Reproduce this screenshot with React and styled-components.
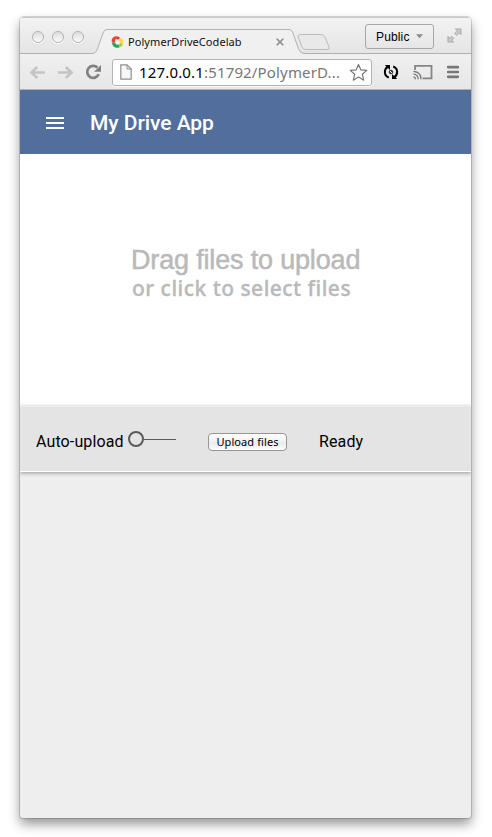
import React from "react";
import styled, { createGlobalStyle } from "styled-components";

const GlobalStyle = createGlobalStyle`
  *, *::before, *::after { box-sizing: border-box; }
  body { margin: 0; background: #fff; overflow: hidden; }
  svg { display: block; flex: none; }
`;

const Page = styled.div`
  height: 837px;
  padding: 17px 21px 0 20px;
`;
const Window = styled.main`
  height: 801px;
  display: flex;
  flex-direction: column;
  overflow: hidden;
  border-radius: 4px 4px 3px 3px;
  background: #eee;
  box-shadow: 0 0 0 1px rgba(0, 0, 0, 0.14), 0 6px 12px rgba(0, 0, 0, 0.42);
`;
const TitleBar = styled.header`
  height: 37px;
  flex: none;
  display: flex;
  align-items: flex-start;
  background: linear-gradient(#f3f3f3, #e4e4e4);
  box-shadow: inset 0 1px #c9c9c9, inset 0 -1px #b0b0b0;
`;
const Lights = styled.div`
  display: flex;
  gap: 8px;
  padding: 14px 0 0 12px;
  width: 73px;
`;
const Light = styled.i`
  width: 12px;
  height: 12px;
  border: 1px solid #b2b2b2;
  border-radius: 50%;
  background: linear-gradient(#dedede, #fafafa);
  box-shadow: 0 1px #fff;
`;
const TabMiddle = styled.div`
  width: 182px;
  height: 25px;
  margin-top: 12px;
  padding: 0 3px 0 4px;
  display: flex;
  align-items: center;
  border-top: 1px solid #b2b2b2;
  background: #f0f0f0;
`;
const TabTitle = styled.span`
  flex: 1;
  margin-left: 4px;
  color: #111;
  font: 11px/16px "Noto Sans", sans-serif;
  letter-spacing: 0.07px;
  white-space: nowrap;
`;
const TabEdgeBox = styled.div`
  margin-top: 12px;
`;
const NewTab = styled.div`
  margin: 17px 0 0 -7px;
`;
const ProfileButton = styled.button`
  width: 69px;
  height: 25px;
  margin: 7px 0 0 auto;
  padding: 0 9px 0 10px;
  display: flex;
  align-items: center;
  justify-content: space-between;
  border: 1px solid #a6a6a6;
  border-radius: 3px;
  background: linear-gradient(#f2f2f2, #e6e6e6);
  color: #000;
  font: 12px "Liberation Sans", sans-serif;
  letter-spacing: 0.15px;
`;
const Expand = styled.div`
  margin: 11px 9px 0 13px;
`;
const Toolbar = styled.nav`
  height: 36px;
  flex: none;
  display: flex;
  align-items: center;
  padding-left: 9px;
  background: linear-gradient(#f0f0f0, #e6e6e6);
  box-shadow: inset 0 -1px #b4b4b4;
`;
const NavIcons = styled.div`
  width: 83px;
  display: flex;
  gap: 12px;
`;
const Omnibox = styled.div`
  width: 260px;
  height: 27px;
  display: flex;
  align-items: center;
  padding: 0 3px 0 7px;
  border: 1px solid #b3b3b3;
  border-radius: 3px;
  background: #fff;
  box-shadow: 0 1px #f8f8f8;
`;
const Url = styled.span`
  flex: 1;
  margin-left: 7px;
  color: #777;
  font: 15px/20px "Noto Sans", sans-serif;
  letter-spacing: 0.16px;
  white-space: nowrap;
  b { color: #000; font-weight: 400; }
`;
const ToolIcons = styled.div`
  display: flex;
  align-items: center;
  margin-left: 10px;
`;
const Gap = styled.span`
  width: ${(p) => p.$w}px;
`;
const AppBar = styled.div`
  height: 64px;
  flex: none;
  display: flex;
  align-items: center;
  padding-left: 26px;
  background: #526e9c;
`;
const MenuIcon = styled.div`
  width: 18px;
  height: 12px;
  margin-top: 2px;
  border: solid #fff;
  border-width: 2px 0;
  background: linear-gradient(transparent 3px, #fff 3px, #fff 5px, transparent 5px);
`;
const AppTitle = styled.h1`
  margin: 1px 0 0 26px;
  color: #fff;
  font: 500 21px/28px Roboto, sans-serif;
  letter-spacing: -0.05px;
`;
const DropZone = styled.section`
  height: 252px;
  flex: none;
  padding: 90px 0 0 111px;
  background: #fff;
  color: #b9b9b9;
  white-space: nowrap;
`;
const DropTitle = styled.div`
  font: 27px/32px "Liberation Sans", sans-serif;
  letter-spacing: -0.17px;
  -webkit-text-stroke: 0.5px #b9b9b9;
`;
const DropHint = styled.div`
  margin-left: 1px;
  font: 500 21px/24px "Noto Sans", sans-serif;
  letter-spacing: 0.48px;
  -webkit-text-stroke: 0.3px #b9b9b9;
`;
const StatusBar = styled.section`
  height: 66px;
  flex: none;
  display: flex;
  align-items: center;
  padding: 6px 0 0 16px;
  border-top: 1px solid #ededed;
  border-bottom: 1px solid #fff;
  background: #e4e4e4;
  box-shadow: 0 1px 4px rgba(0, 0, 0, 0.38);
  color: #000;
  font: 16px/22px Roboto, sans-serif;
`;
const StatusLabel = styled.span`
  width: ${(p) => p.$w}px;
  letter-spacing: 0.12px;
  white-space: nowrap;
`;
const Toggle = styled.div`
  width: 48px;
  height: 16px;
  margin: -6px 32px 0 0;
  display: flex;
  align-items: center;
  &::before {
    content: "";
    width: 16px;
    height: 16px;
    border: 2px solid #5a5a5a;
    border-radius: 50%;
  }
  &::after {
    content: "";
    flex: 1;
    height: 1px;
    background: #5a5a5a;
  }
`;
const UploadButton = styled.button`
  width: 79px;
  height: 18px;
  margin-top: -1px;
  margin-right: 32px;
  padding: 0;
  border: 1px solid #969696;
  border-radius: 4px;
  background: linear-gradient(#fff, #f1f1f1 50%, #e9e9e9 51%, #fff);
  color: #000;
  font: 11px/15px "Noto Sans", sans-serif;
  letter-spacing: 0.1px;
  white-space: nowrap;
`;

const Icon = ({ w, h, children }) => (
  <svg width={w} height={h} viewBox={`0 0 ${w} ${h}`} fill="none">{children}</svg>
);

const Arrow = () => (
  <g stroke="#c4c4c4" strokeWidth="2.5"><path d="M2 8.5H16M8.3 3L2.4 8.5L8.3 14" /></g>
);

export default function App() {
  return (
    <Page>
      <GlobalStyle />
      <Window>
        <TitleBar>
          <Lights><Light /><Light /><Light /></Lights>
          <TabEdgeBox>
            <Icon w={14} h={25}>
              <path d="M0 25V24.5Q3 24 4.5 20L10 4Q11 .5 14 .5V25Z" fill="#f0f0f0" />
              <path d="M0 24.5Q3 24 4.5 20L10 4Q11 .5 14 .5" stroke="#b2b2b2" />
            </Icon>
          </TabEdgeBox>
          <TabMiddle>
            <Icon w={13} h={12}>
              <path d="M1 6.8C-.3 3 2 .2 6 .2L5.8 3C4.2 3 3.8 4.5 4.3 6.5Z" fill="#ee4037" />
              <path d="M6.2 .4C8 .2 9 1.4 9 3.2L5.8 3.5Z" fill="#d62d2d" />
              <path d="M8.3 2C11.8 2 13.2 5 11.8 8.6L9.2 7.5C9.7 5.8 9 4.8 7.5 4.7Z" fill="#fcd83f" />
              <path d="M1 7L4.2 6.6C4.4 8.5 6 9 7.6 8.4L8.6 11.3C4.8 12.8 1.5 11 1 7Z" fill="#27a35a" />
              <path d="M7.6 8.4L9.6 6.8L11.7 8.8C11 10.3 10 11 8.6 11.3Z" fill="#a5cf4c" />
            </Icon>
            <TabTitle>PolymerDriveCodelab</TabTitle>
            <Icon w={12} h={12}><path d="M2.7 2.7L9.3 9.3M9.3 2.7L2.7 9.3" stroke="#8b8b8b" strokeWidth="1.6" /></Icon>
          </TabMiddle>
          <TabEdgeBox>
            <Icon w={15} h={25}>
              <path d="M0 25V.5Q3 .5 4 4L9.5 20Q11 24 15 24.5V25Z" fill="#f0f0f0" />
              <path d="M0 .5Q3 .5 4 4L9.5 20Q11 24 15 24.5" stroke="#b2b2b2" />
            </Icon>
          </TabEdgeBox>
          <NewTab>
            <Icon w={34} h={17}>
              <path d="M4 .5H24Q27 .5 28 3L32 13Q33 15.5 30 15.5H9Q6 15.5 5 13L1.2 3Q.5.5 4 .5Z" fill="#e9e9e9" stroke="#bcbcbc" />
            </Icon>
          </NewTab>
          <ProfileButton>
            Public
            <Icon w={9} h={5}><path d="M1 .3H8L4.5 4.3Z" fill="#8b8b8b" /></Icon>
          </ProfileButton>
          <Expand>
            <Icon w={15} h={15}>
              <path d="M8.3 .9H14.1V6.7L12.2 4.9L9.6 7.5L7.5 5.4L10.1 2.8ZM.9 8.3L2.8 10.1L4.7 8.2L6.8 10.3L4.9 12.2L6.7 14.1H.9Z" fill="#c8c8c8" stroke="#a5a5a5" strokeWidth=".8" />
            </Icon>
          </Expand>
        </TitleBar>
        <Toolbar>
          <NavIcons>
            <Icon w={16} h={16}><Arrow /></Icon>
            <Icon w={16} h={16}><g transform="translate(17 0) scale(-1 1)"><Arrow /></g></Icon>
            <Icon w={17} h={16}>
              <path d="M13.7 10.3A6 6 0 1 1 12.4 3.6" stroke="#818181" strokeWidth="2.7" />
              <path d="M16 1V7.8H9Z" fill="#818181" />
            </Icon>
          </NavIcons>
          <Omnibox>
            <Icon w={12} h={16}>
              <path d="M.8.8H7L11.2 5V15.2H.8Z" fill="#f7f7f7" stroke="#8f8f8f" strokeWidth="1.2" />
              <path d="M7 .8V5H11.2" stroke="#8f8f8f" />
            </Icon>
            <Url><b>127.0.0.1</b>:51792/PolymerD...</Url>
            <Icon w={19} h={19}>
              <path d="M9.5 1.5L11.9 6.9L17.8 7.4L13.3 11.3L14.7 17.2L9.5 14.1L4.3 17.2L5.7 11.3L1.2 7.4L7.1 6.9Z" stroke="#777" strokeWidth="1.2" strokeLinejoin="round" />
            </Icon>
          </Omnibox>
          <ToolIcons>
            <Icon w={18} h={18}>
              <g stroke="#000" strokeWidth="2">
                <path d="M6.8 14.5C1.9 12.8 1.6 6.5 5.8 3.6" />
                <path d="M11.2 3.5C16.1 5.2 16.4 11.5 12.2 14.4" />
              </g>
              <path d="M2.8 2H8V7L6.4 5.4L5 4Z M15.2 16H10V11L11.6 12.6L13 14Z" fill="#000" />
              <circle cx="9" cy="9" r="1.8" stroke="#222" strokeWidth="1" />
              <path d="M8.3 9.7L9.8 8.2" stroke="#000" />
            </Icon>
            <Gap $w={13} />
            <Icon w={20} h={17}>
              <path d="M2 6V1.9H18.5V14.3H9.5" stroke="#858585" strokeWidth="1.8" />
              <path d="M.5 7.4Q8 8 8 15.2M.5 10Q5 10.5 5.2 15.2M.5 12.8Q2.4 13 2.5 15.2" stroke="#707070" strokeWidth="1.2" />
            </Icon>
            <Gap $w={13} />
            <Icon w={14} h={14}><path d="M2.2 2.2H11.8M2.2 7H11.8M2.2 11.8H11.8" stroke="#777" strokeWidth="2.7" strokeLinecap="round" /></Icon>
          </ToolIcons>
        </Toolbar>
        <AppBar>
          <MenuIcon />
          <AppTitle>My Drive App</AppTitle>
        </AppBar>
        <DropZone>
          <DropTitle>Drag files to upload</DropTitle>
          <DropHint>or click to select files</DropHint>
        </DropZone>
        <StatusBar>
          <StatusLabel $w={92}>Auto-upload</StatusLabel>
          <Toggle />
          <UploadButton>Upload files</UploadButton>
          <StatusLabel $w={60}>Ready</StatusLabel>
        </StatusBar>
      </Window>
    </Page>
  );
}
